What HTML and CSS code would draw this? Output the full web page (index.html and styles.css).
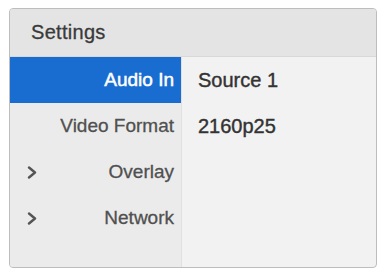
FILE: index.html
```html
<!DOCTYPE html>
<html lang="en">
<head>
    <meta charset="UTF-8">
    <meta name="viewport" content="width=device-width, initial-scale=1.0">
    <title>Settings</title>
    <link rel="stylesheet" href="styles.css">
</head>
<body>
    <div class="panel">
        <header>Settings</header>
        <div class="body">
            <ul class="menu">
                <li class="active"><span class="label">Audio In</span></li>
                <li><span class="label">Video Format</span></li>
                <li>
                    <svg class="arrow" width="10" height="13" viewBox="0 0 10 13"><path d="M2 1.5 L8 6.5 L2 11.5" fill="none" stroke="#555" stroke-width="2.4" stroke-linecap="round" stroke-linejoin="round"/></svg>
                    <span class="label">Overlay</span>
                </li>
                <li>
                    <svg class="arrow" width="10" height="13" viewBox="0 0 10 13"><path d="M2 1.5 L8 6.5 L2 11.5" fill="none" stroke="#555" stroke-width="2.4" stroke-linecap="round" stroke-linejoin="round"/></svg>
                    <span class="label">Network</span>
                </li>
            </ul>
            <ul class="values">
                <li>Source 1</li>
                <li>2160p25</li>
            </ul>
        </div>
    </div>
</body>
</html>
```

FILE: styles.css
```css
*{
    margin: 0;
    padding: 0;
    box-sizing: border-box;
    font-family: "Liberation Sans", Arial, sans-serif;
}
body{
    background: #fff;
}
.panel{
    margin: 8px 0 0 9px;
    width: 368px;
    height: 260px;
    border: 1px solid #bdbdbd;
    border-radius: 4px;
    overflow: hidden;
    display: flex;
    flex-direction: column;
    background: #f2f2f2;
}
.panel header{
    height: 48px;
    padding-left: 21px;
    display: flex;
    align-items: center;
    background: #e4e4e4;
    border-bottom: 1px solid #d8d8d8;
    color: #3a3a3a;
    font-size: 20px;
    letter-spacing: 0.3px;
    -webkit-text-stroke: 0.3px #3a3a3a;
}
.body{
    flex: 1;
    display: flex;
}
.menu{
    list-style: none;
    width: 172px;
    background: #ebebeb;
    border-right: 1px solid #e0e0e0;
}
.menu li{
    height: 46px;
    display: flex;
    align-items: center;
    padding: 0 7px 0 17px;
    color: #505050;
    font-size: 19px;
    -webkit-text-stroke: 0.3px #505050;
}
.menu li .label{
    margin-left: auto;
}
.menu li.active{
    background: #1a6dd0;
    color: #fff;
    -webkit-text-stroke: 0.5px #fff;
}
.values{
    list-style: none;
    flex: 1;
}
.values li{
    height: 46px;
    display: flex;
    align-items: center;
    padding-left: 16px;
    color: #333;
    font-size: 20px;
    -webkit-text-stroke: 0.4px #333;
}
```
